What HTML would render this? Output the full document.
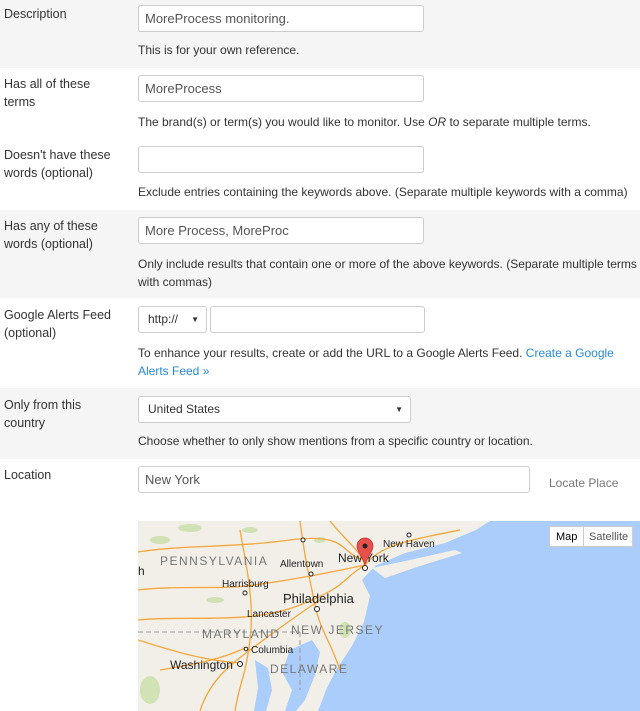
<!DOCTYPE html>
<html><head><meta charset="utf-8"><style>
*{box-sizing:border-box}
body{margin:0;width:640px;height:711px;overflow:hidden;background:#fff;font-family:"Liberation Sans",Arial,sans-serif;font-size:12.5px;color:#333;position:relative}
.row{position:absolute;left:0;width:640px}
.g{background:#f5f5f5}
.lbl{position:absolute;left:4px;line-height:18px}
.in{position:absolute;height:27px;border:1px solid #ccc;border-radius:3px;background:#fff;color:#555;font-size:13px;line-height:25px;padding-left:6px}
.help{position:absolute;left:138px;line-height:18px;font-size:12px}
.arr{position:absolute;right:7px;top:0;font-size:8px}
a{color:#2a8ad4;text-decoration:none}
</style></head><body>
<div class="row g" style="top:0;height:68px"></div>
<div class="row g" style="top:210px;height:88px"></div>
<div class="row g" style="top:388px;height:71px"></div>

<div class="lbl" style="top:5px">Description</div>
<div class="in" style="left:138px;top:5px;width:286px">MoreProcess monitoring.</div>
<div class="help" style="top:41px">This is for your own reference.</div>

<div class="lbl" style="top:75px">Has all of these<br>terms</div>
<div class="in" style="left:138px;top:75px;width:286px">MoreProcess</div>
<div class="help" style="top:113px">The brand(s) or term(s) you would like to monitor. Use <i>OR</i> to separate multiple terms.</div>

<div class="lbl" style="top:146px">Doesn't have these<br>words (optional)</div>
<div class="in" style="left:138px;top:146px;width:286px"></div>
<div class="help" style="top:183px">Exclude entries containing the keywords above. (Separate multiple keywords with a comma)</div>

<div class="lbl" style="top:217px">Has any of these<br>words (optional)</div>
<div class="in" style="left:138px;top:217px;width:286px">More Process, MoreProc</div>
<div class="help" style="top:255px;width:500px">Only include results that contain one or more of the above keywords. (Separate multiple terms with commas)</div>

<div class="lbl" style="top:306px">Google Alerts Feed<br>(optional)</div>
<div class="in" style="left:138px;top:306px;width:69px;padding-left:9px;color:#333;font-size:12px">http://<span class="arr">▼</span></div>
<div class="in" style="left:210px;top:306px;width:215px"></div>
<div class="help" style="top:344px;width:500px">To enhance your results, create or add the URL to a Google Alerts Feed. <a>Create a Google Alerts Feed »</a></div>

<div class="lbl" style="top:396px">Only from this<br>country</div>
<div class="in" style="left:138px;top:396px;width:273px;padding-left:9px;color:#333;font-size:12px">United States<span class="arr">▼</span></div>
<div class="help" style="top:432px">Choose whether to only show mentions from a specific country or location.</div>

<div class="lbl" style="top:466px">Location</div>
<div class="in" style="left:138px;top:466px;width:392px">New York</div>
<div style="position:absolute;left:549px;top:476px;color:#777;font-size:12px">Locate Place</div>

<svg style="position:absolute;left:138px;top:521px" width="502" height="190" viewBox="138 521 502 190" font-family="Liberation Sans,Arial,sans-serif">
<rect x="138" y="521" width="502" height="190" fill="#abcdfb"/>
<polygon fill="#f2efe9" points="138,521 490,521 476,530 445,543 405,553 375,566 362,580 370,596 364,622 352,646 336,670 326,690 318,711 138,711"/>
<polygon fill="#f2efe9" points="372,568 410,560 455,550 462,553 420,566 385,578"/>
<polygon fill="#abcdfb" points="290,650 312,640 320,652 315,675 305,700 296,711 285,711 292,690 282,672"/>
<polygon fill="#abcdfb" points="255,660 268,668 272,690 266,711 254,711 258,688"/>
<g fill="#c8dfa8" opacity=".8">
<ellipse cx="160" cy="540" rx="10" ry="4"/><ellipse cx="190" cy="528" rx="12" ry="4"/><ellipse cx="250" cy="530" rx="8" ry="3"/><ellipse cx="215" cy="600" rx="9" ry="3"/><ellipse cx="150" cy="690" rx="10" ry="14"/><ellipse cx="345" cy="630" rx="6" ry="8"/><ellipse cx="320" cy="540" rx="6" ry="3"/></g>
<g stroke="#f5a73b" stroke-width="1.3" fill="none">
<path d="M138,552 C180,545 230,548 290,540 S340,555 365,560"/>
<path d="M138,590 C180,585 220,590 255,585 S320,575 365,565"/>
<path d="M138,620 C190,615 250,625 300,605 S340,580 365,565"/>
<path d="M200,711 C210,680 230,665 250,650 S290,620 320,600"/>
<path d="M240,530 C245,560 255,600 250,640 S240,680 235,711"/>
<path d="M300,521 C305,560 310,580 315,605 S330,640 340,670"/>
<path d="M160,670 C190,665 220,660 245,648"/>
<path d="M365,565 C380,545 410,540 460,530"/>
<path d="M330,521 C345,540 360,550 365,565"/>
<path d="M138,640 C170,650 200,660 240,663"/>
</g>
<path d="M138,632 L300,632" stroke="#999" stroke-dasharray="5,3" fill="none"/>
<path d="M300,632 L300,690" stroke="#999" stroke-dasharray="5,3" fill="none"/>
<g font-size="11" fill="#777" letter-spacing="1.5">
<text x="160" y="565" font-size="12">PENNSYLVANIA</text>
<text x="202" y="638" font-size="12">MARYLAND</text>
<text x="291" y="634" font-size="12">NEW JERSEY</text>
<text x="270" y="673" font-size="12">DELAWARE</text>
</g>
<g font-size="10" fill="#222">
<text x="280" y="567">Allentown</text>
<text x="222" y="587">Harrisburg</text>
<text x="247" y="617">Lancaster</text>
<text x="251" y="653">Columbia</text>
<text x="383" y="547">New Haven</text>
<text x="138" y="575" font-size="12">h</text>
<text x="283" y="603" font-size="13">Philadelphia</text>
<text x="170" y="669" font-size="12">Washington</text>
<text x="338" y="562" font-size="12">New York</text>
</g>
<g fill="#fff" stroke="#222" stroke-width="1">
<circle cx="303" cy="540" r="2"/><circle cx="311" cy="574" r="2"/><circle cx="245" cy="593" r="2"/><circle cx="317" cy="609" r="2.5"/><circle cx="246" cy="649" r="1.8"/><circle cx="240" cy="664" r="2.5"/><circle cx="409" cy="535" r="2"/><circle cx="365" cy="568" r="2.5"/></g>
<path d="M365,538 a8,8 0 0 1 8,8 c0,6 -5,9 -8,19 c-3,-10 -8,-13 -8,-19 a8,8 0 0 1 8,-8z" fill="#e8514b" stroke="#b33" stroke-width=".7"/>
<circle cx="365" cy="546" r="2.5" fill="#222"/>
<rect x="549.5" y="526.5" width="34" height="20" fill="#fff" stroke="#ccc"/>
<rect x="583.5" y="526.5" width="49" height="20" fill="#fff" stroke="#ccc"/>
<text x="556" y="540" font-size="11" fill="#000">Map</text>
<text x="589" y="540" font-size="11" fill="#555">Satellite</text>
</svg>
</body></html>
